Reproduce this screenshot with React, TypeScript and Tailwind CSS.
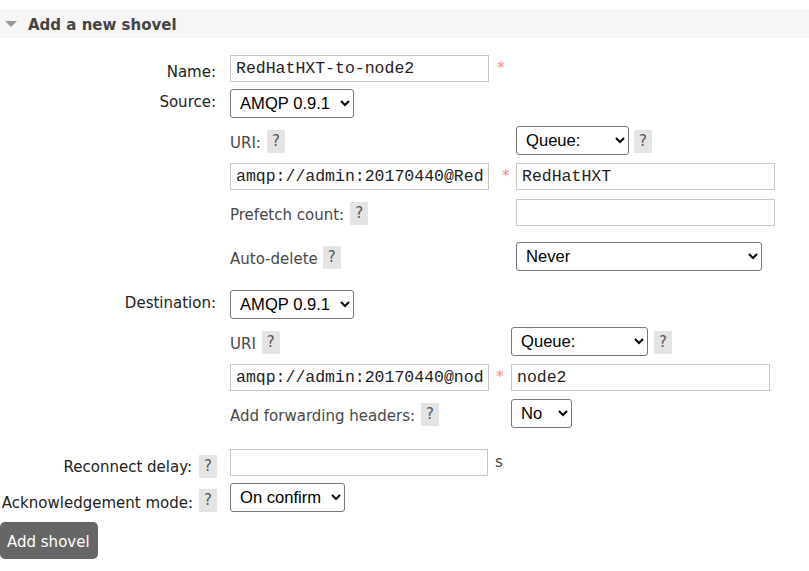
import React from "react";

// Caixinha de ajuda cinza com "?"
function Help({ className = "" }: { className?: string }) {
  return (
    <span
      className={`inline-flex w-[18px] h-[23px] items-center justify-center bg-[#e4e4e4] text-[#555] text-[15px] leading-none shrink-0 ${className}`}
    >
      ?
    </span>
  );
}

// Asterisco de campo obrigatorio
function Req({ className = "" }: { className?: string }) {
  return <span className={`text-[#f88] text-[15px] leading-none self-start mt-[6px] ${className}`}>*</span>;
}

const inputCls =
  "h-[27px] border border-[#c8c8c8] bg-white px-[5px] text-[16.5px] text-[#222] outline-none font-['Liberation_Mono','Courier_New',monospace]";

const selectCls =
  "h-[29px] border border-[#767676] rounded-[3px] bg-white pl-[5px] text-[16.6px] text-black font-['Liberation_Sans',Arial,sans-serif]";

export default function App() {
  return (
    <div className="w-[809px] h-[571px] bg-white pt-[9px] font-['DejaVu_Sans',Verdana,sans-serif] text-[15px] text-[#222] overflow-hidden">
      {/* Cabecalho da secao */}
      <div className="h-[29px] bg-[#f6f6f6] flex items-center">
        <svg width="12" height="6" viewBox="0 0 12 6" className="ml-[5px] mt-[1px]">
          <polygon points="0,0 12,0 6,6" fill="#999" />
        </svg>
        <h2 className="ml-[11px] pt-[4px] font-bold text-[15px] text-[#444]">Add a new shovel</h2>
      </div>

      {/* Nome */}
      <div className="flex items-center mt-[17px] h-[27px]">
        <div className="w-[217px] text-right pr-[1px] pt-[8px]">Name:</div>
        <input className={`${inputCls} ml-[13px] w-[259px]`} defaultValue="RedHatHXT-to-node2" />
        <Req className="ml-[8px]" />
      </div>

      {/* Origem */}
      <div className="flex items-start mt-[7px]">
        <div className="w-[217px] text-right pr-[1px] pt-[2px]">Source:</div>
        <select className={`${selectCls} ml-[13px] w-[124px]`} defaultValue="amqp091">
          <option value="amqp091">AMQP 0.9.1</option>
          <option value="amqp10">AMQP 1.0</option>
        </select>
      </div>

      <div className="ml-[230px] text-[#484848]">
        <div className="flex items-center mt-[8px] h-[29px]">
          <div className="w-[286px] flex items-center">
            <span className="pt-[6px]">URI:</span>
            <Help className="ml-[6px] mt-[1px]" />
          </div>
          <select className={`${selectCls} w-[113px]`} defaultValue="queue">
            <option value="queue">Queue:</option>
            <option value="exchange">Exchange:</option>
          </select>
          <Help className="ml-[5px] mt-[1px]" />
        </div>
        <div className="flex items-center mt-[8px] h-[27px]">
          <input className={`${inputCls} w-[259px]`} defaultValue="amqp://admin:20170440@RedHatHXT" />
          <Req className="ml-[13px] w-[14px]" />
          <input className={`${inputCls} w-[259px]`} defaultValue="RedHatHXT" />
        </div>
        <div className="flex items-center mt-[9px] h-[27px]">
          <div className="w-[286px] flex items-center">
            <span className="pt-[6px]">Prefetch count:</span>
            <Help className="ml-[6px] mt-[1px]" />
          </div>
          <input className={`${inputCls} w-[259px]`} defaultValue="" />
        </div>
        <div className="flex items-center mt-[16px] h-[29px]">
          <div className="w-[286px] flex items-center">
            <span className="pt-[6px]">Auto-delete</span>
            <Help className="ml-[5px] mt-[1px]" />
          </div>
          <select className={`${selectCls} w-[246px]`} defaultValue="never">
            <option value="never">Never</option>
            <option value="after">After initial length transferred</option>
            <option value="number">After num messages</option>
          </select>
        </div>
      </div>

      {/* Destino */}
      <div className="flex items-start mt-[19px]">
        <div className="w-[217px] text-right pr-[1px] pt-[2px]">Destination:</div>
        <select className={`${selectCls} ml-[13px] w-[124px]`} defaultValue="amqp091">
          <option value="amqp091">AMQP 0.9.1</option>
          <option value="amqp10">AMQP 1.0</option>
        </select>
      </div>

      <div className="ml-[230px] text-[#484848]">
        <div className="flex items-center mt-[8px] h-[29px]">
          <div className="w-[281px] flex items-center">
            <span className="pt-[6px]">URI</span>
            <Help className="ml-[6px] mt-[1px]" />
          </div>
          <select className={`${selectCls} w-[137px]`} defaultValue="queue">
            <option value="queue">Queue:</option>
            <option value="exchange">Exchange:</option>
          </select>
          <Help className="ml-[6px] mt-[1px]" />
        </div>
        <div className="flex items-center mt-[8px] h-[27px]">
          <input className={`${inputCls} w-[259px]`} defaultValue="amqp://admin:20170440@node2" />
          <Req className="ml-[7px] w-[15px]" />
          <input className={`${inputCls} w-[259px]`} defaultValue="node2" />
        </div>
        <div className="flex items-center mt-[8px] h-[29px]">
          <div className="w-[281px] flex items-center">
            <span className="pt-[6px]">Add forwarding headers:</span>
            <Help className="ml-[6px] mt-[1px]" />
          </div>
          <select className={`${selectCls} w-[61px]`} defaultValue="no">
            <option value="no">No</option>
            <option value="yes">Yes</option>
          </select>
        </div>
      </div>

      {/* Atraso de reconexao */}
      <div className="flex items-start mt-[21px]">
        <div className="w-[217px] flex items-center justify-end mt-[5px] h-[24px]">
          <span className="pt-[3px]">Reconnect delay:</span>
          <Help className="ml-[7px]" />
        </div>
        <input className={`${inputCls} ml-[13px] w-[258px]`} defaultValue="" />
        <span className="ml-[7px] mt-[2px] text-[#484848]">s</span>
      </div>

      {/* Modo de confirmacao */}
      <div className="flex items-start mt-[5px]">
        <div className="w-[217px] flex items-center justify-end mt-[6px] h-[23px]">
          <span className="pt-[6px]">Acknowledgement mode:</span>
          <Help className="ml-[6px]" />
        </div>
        <select className={`${selectCls} ml-[13px] w-[115px]`} defaultValue="confirm">
          <option value="confirm">On confirm</option>
          <option value="publish">On publish</option>
          <option value="none">No ack</option>
        </select>
      </div>

      <button className="mt-[10px] h-[37px] w-[98px] rounded-[5px] bg-[#666] text-white text-[15px] text-left pl-[7px] pt-[3px]">
        Add shovel
      </button>
    </div>
  );
}
